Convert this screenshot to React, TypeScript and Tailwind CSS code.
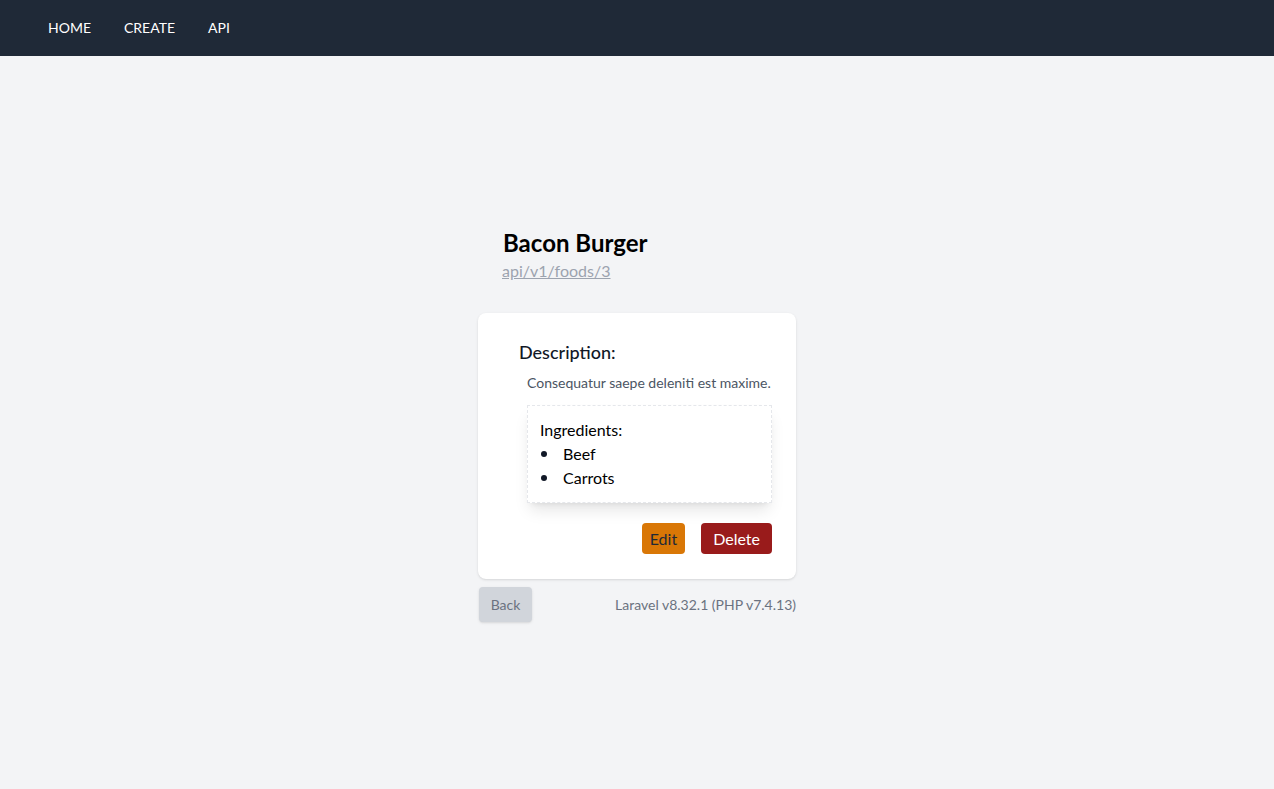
import React from 'react';

const font = { fontFamily: 'Lato, "Noto Sans", sans-serif' };

const NavBar: React.FC = () => {
  const links = ['HOME', 'CREATE', 'API'];
  return (
    <nav className="h-14 bg-[#1f2937] flex items-center pl-12 gap-[33px]">
      {links.map(link => (
        <a key={link} href="#" className="text-sm text-white">
          {link}
        </a>
      ))}
    </nav>
  );
};

const App: React.FC = () => {
  const ingredients = ['Beef', 'Carrots'];

  return (
    <div className="min-h-screen bg-[#f3f4f6] flex flex-col" style={font}>
      <NavBar />
      <main className="flex-1 flex items-center justify-center pt-[4px]">
        <div className="w-[318px]">
          {/* Heading */}
          <div className="pl-[25px]">
            <h1 className="text-2xl font-bold text-black leading-8">Bacon Burger</h1>
            <a href="#" className="block -ml-px text-base text-[#9ca3af] underline leading-6">
              api/v1/foods/3
            </a>
          </div>

          {/* Card */}
          <div className="mt-[30px] bg-white rounded-lg shadow px-6 pt-[25px] pb-[25px]">
            <h3 className="ml-[17px] text-lg font-medium text-[#111827] leading-7">Description:</h3>
            <div className="ml-[25px]">
              <p className="mt-[7px] text-sm text-[#4b5563] leading-5 whitespace-nowrap">
                Consequatur saepe deleniti est maxime.
              </p>
              <div className="mt-3 p-3 border border-dashed border-[#e5e7eb] shadow-lg text-black">
                <p className="leading-6">Ingredients:</p>
                <ul>
                  {ingredients.map(item => (
                    <li key={item} className="flex items-center leading-6">
                      <span className="w-[23px] flex items-center">
                        <span className="ml-px w-[6px] h-[6px] rounded-full bg-[#111827]" />
                      </span>
                      {item}
                    </li>
                  ))}
                </ul>
              </div>
            </div>
            <div className="mt-5 flex justify-end gap-4">
              <button className="h-[31px] px-2 bg-[#d97706] text-[#1f2937] rounded-sm">Edit</button>
              <button className="h-[31px] px-3 bg-[#991b1b] text-white rounded-sm">Delete</button>
            </div>
          </div>

          {/* Footer */}
          <div className="mt-2 flex items-center justify-between">
            <button className="ml-px h-[35px] w-[53px] bg-[#d1d5db] text-sm text-[#6b7280] rounded-sm shadow">
              Back
            </button>
            <span className="text-sm text-[#6b7280]">Laravel v8.32.1 (PHP v7.4.13)</span>
          </div>
        </div>
      </main>
    </div>
  );
};

export default App;
